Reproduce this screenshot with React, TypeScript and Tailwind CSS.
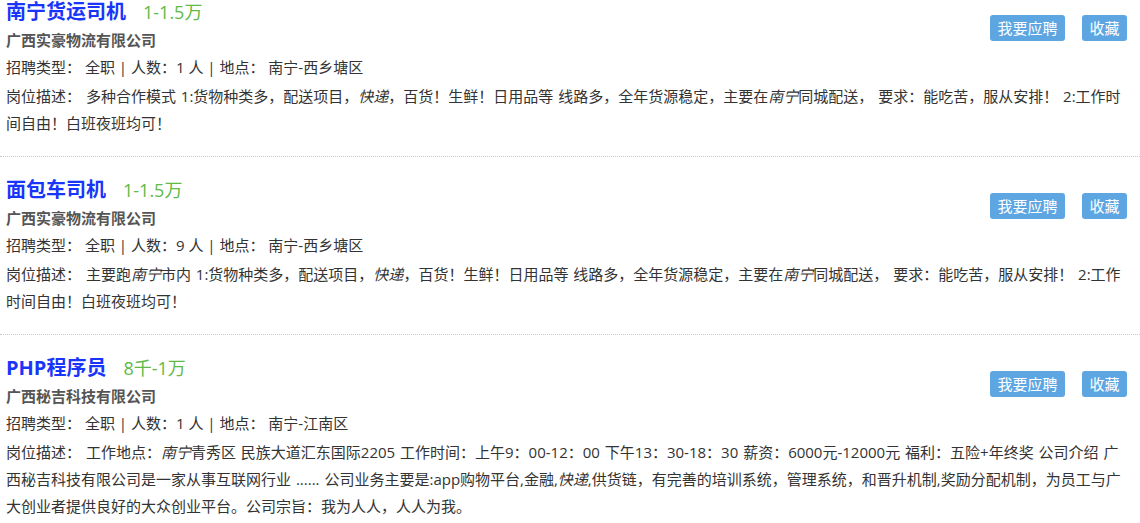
import React from 'react';

type Job = {
  title: string;
  salary: string;
  company: string;
  count: string;
  place: string;
  desc: React.ReactNode;
};

const jobs: Job[] = [
  {
    title: '南宁货运司机',
    salary: '1-1.5万',
    company: '广西实豪物流有限公司',
    count: '1',
    place: '南宁-西乡塘区',
    desc: (
      <>
        多种合作模式 1:货物种类多，配送项目，<i>快递</i>，百货！生鲜！日用品等 线路多，全年货源稳定，主要在<i>南宁</i>同城配送， 要求：能吃苦，服从安排！ 2:工作时间自由！白班夜班均可！
      </>
    ),
  },
  {
    title: '面包车司机',
    salary: '1-1.5万',
    company: '广西实豪物流有限公司',
    count: '9',
    place: '南宁-西乡塘区',
    desc: (
      <>
        主要跑<i>南宁</i>市内 1:货物种类多，配送项目，<i>快递</i>，百货！生鲜！日用品等 线路多，全年货源稳定，主要在<i>南宁</i>同城配送， 要求：能吃苦，服从安排！ 2:工作时间自由！白班夜班均可！
      </>
    ),
  },
  {
    title: 'PHP程序员',
    salary: '8千-1万',
    company: '广西秘吉科技有限公司',
    count: '1',
    place: '南宁-江南区',
    desc: (
      <>
        工作地点：<i>南宁</i>青秀区 民族大道汇东国际2205 工作时间：上午9：00-12：00 下午13：30-18：30 薪资：6000元-12000元 福利：五险+年终奖 公司介绍 广西秘吉科技有限公司是一家从事互联网行业 ...... 公司业务主要是:app购物平台,金融,<i>快递</i>,供货链，有完善的培训系统，管理系统，和晋升机制,奖励分配机制，为员工与广大创业者提供良好的大众创业平台。公司宗旨：我为人人，人人为我。
      </>
    ),
  },
];

export default function App() {
  return (
    <div
      className="h-[523px] overflow-hidden bg-white text-[15px] text-[#333]"
      style={{ fontFamily: '"Open Sans", "Noto Sans CJK SC", sans-serif' }}
    >
      {/* list is scrolled a little: first item starts above the viewport */}
      <div className="-mt-[21px]">
        {jobs.map((job) => (
          <div
            key={job.title}
            className="border-b border-dotted border-[#c8c8c8] pl-[6px] pr-[13px] pt-[19px] pb-[19px]"
          >
            <div className="float-right mt-[17px] flex gap-[17px]">
              <button className="h-[26px] w-[75px] rounded-[3px] bg-[#5da6e2] text-[15px] leading-[26px] text-white">
                我要应聘
              </button>
              <button className="h-[26px] w-[45px] rounded-[3px] bg-[#5da6e2] text-[15px] leading-[26px] text-white">
                收藏
              </button>
            </div>
            <div className="flex h-[28px] items-center">
              <span className="text-[20px] font-bold text-[#1a35fa]">{job.title}</span>
              <span className="ml-[17px] text-[18px] text-[#5fba46]">{job.salary}</span>
            </div>
            <div className="font-bold leading-[28px] text-[#555]">{job.company}</div>
            <div className="leading-[27px]">
              招聘类型： 全职 | 人数：{job.count} 人 | 地点： {job.place}
            </div>
            <div className="mt-[2px] leading-[27px] [word-spacing:1px]">岗位描述： {job.desc}</div>
          </div>
        ))}
      </div>
    </div>
  );
}
